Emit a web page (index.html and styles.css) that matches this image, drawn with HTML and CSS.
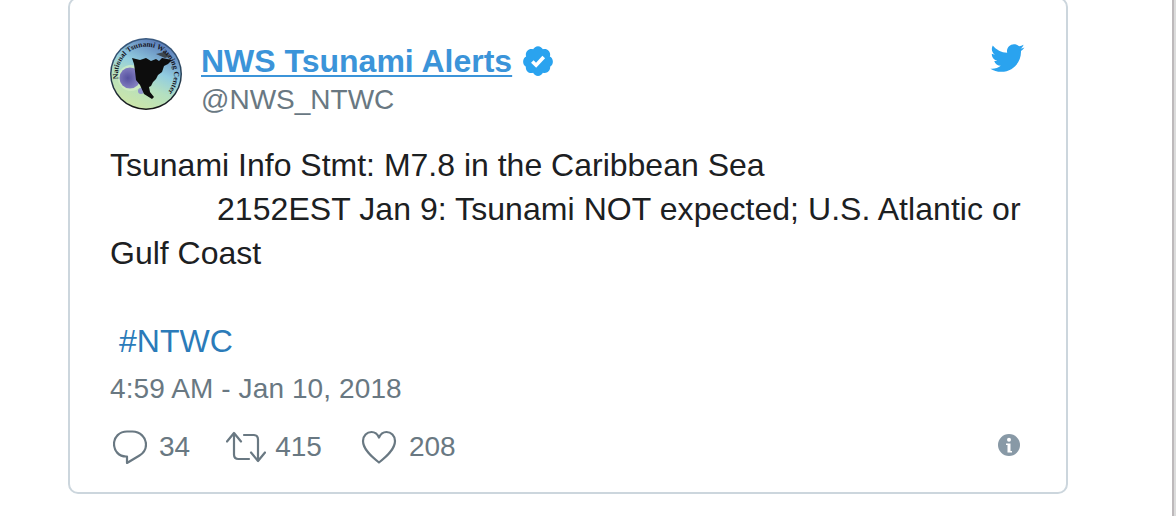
FILE: index.html
```html
<!DOCTYPE html>
<html lang="en">
<head>
<meta charset="utf-8">
<title>NWS Tsunami Alerts</title>
<link rel="stylesheet" href="styles.css">
</head>
<body>
<div class="page">
  <article class="card">
    <header class="head">
      <svg class="avatar" viewBox="0 0 72 72" aria-hidden="true">
        <defs>
          <linearGradient id="av" x1="0.15" y1="0.95" x2="0.6" y2="0">
            <stop offset="0" stop-color="#cfe6a6"/>
            <stop offset=".38" stop-color="#b4e0c0"/>
            <stop offset=".62" stop-color="#92cde0"/>
            <stop offset="1" stop-color="#5d7fba"/>
          </linearGradient>
          <radialGradient id="pur" cx=".4" cy=".5" r=".6">
            <stop offset="0" stop-color="#55519f"/>
            <stop offset="1" stop-color="#8b86c6"/>
          </radialGradient>
          <linearGradient id="rim" x1="0" y1="0" x2="0" y2="1">
            <stop offset="0" stop-color="#3a5a80"/>
            <stop offset=".5" stop-color="#29435a"/>
            <stop offset="1" stop-color="#141414"/>
          </linearGradient>
          <path id="ring" d="M8.300 41A28 28 0 1 1 54 58"/>
          <filter id="soft"><feGaussianBlur stdDeviation=".4"/></filter>
        </defs>
        <g filter="url(#soft)">
          <circle cx="36" cy="36" r="36" fill="url(#rim)"/>
          <circle cx="36" cy="36" r="34.500" fill="url(#av)"/>
          <circle cx="21" cy="40" r="13" fill="#d6efc6" opacity=".7"/>
          <circle cx="20" cy="40" r="10.500" fill="url(#pur)"/>
          <circle cx="31" cy="53" r="3" fill="#8f93cc"/>
          <path d="M22 20l8 2 6-2 5 3 5-2 3 2 3-3 10 2-4 4-4 2-2 6-4 3-2 4-3 3-2 4-2 1 1 5 4 5-2 2-8-5-4-9-4-5-1-9-1-7z" fill="#0b0b0b"/>
          <path d="M46 16l8-2 7 4-6 2z" fill="#3c4650"/>
        </g>
        <text class="ring-text"><textPath href="#ring">National Tsunami Warning Center</textPath></text>
      </svg>
      <div class="names">
        <div class="name-row">
          <a class="name" href="#">NWS Tsunami Alerts</a>
          <svg class="badge" viewBox="0 0 24 24" aria-hidden="true">
            <path fill="#2aa3ef" d="M22.500 12.500c0-1.580-.875-2.950-2.148-3.600.154-.435.238-.905.238-1.400 0-2.210-1.710-3.998-3.818-3.998-.47 0-.92.084-1.336.25C14.818 2.415 13.510 1.500 12 1.500s-2.816.917-3.437 2.250c-.415-.165-.866-.25-1.336-.25-2.110 0-3.818 1.790-3.818 4 0 .494.083.964.237 1.400-1.272.65-2.147 2.018-2.147 3.600 0 1.495.782 2.798 1.942 3.486-.02.17-.032.34-.032.514 0 2.210 1.708 4 3.818 4 .47 0 .92-.086 1.335-.25.62 1.334 1.926 2.250 3.437 2.250 1.512 0 2.818-.916 3.437-2.250.415.163.865.248 1.336.248 2.110 0 3.818-1.790 3.818-4 0-.174-.012-.344-.033-.513 1.158-.687 1.943-1.990 1.943-3.484z"/>
            <path fill="#fff" d="M10.700 16.800 7.100 13.300l1.800-1.800 1.700 1.700 4.500-4.900 1.900 1.700z"/>
          </svg>
        </div>
        <div class="handle">@NWS_NTWC</div>
      </div>
      <svg class="bird" viewBox="0 0 24 24" aria-hidden="true">
        <path fill="#2aa3ef" d="M23.643 4.937c-.835.37-1.732.62-2.675.733.962-.576 1.700-1.490 2.048-2.578-.9.534-1.897.922-2.958 1.130-.85-.904-2.060-1.470-3.400-1.470-2.572 0-4.658 2.086-4.658 4.660 0 .364.042.718.12 1.060-3.873-.195-7.304-2.050-9.602-4.868-.4.69-.63 1.490-.63 2.342 0 1.616.823 3.043 2.072 3.878-.764-.025-1.482-.234-2.110-.583v.06c0 2.257 1.605 4.140 3.737 4.568-.392.106-.803.162-1.227.162-.3 0-.593-.028-.877-.082.593 1.850 2.313 3.198 4.352 3.234-1.595 1.250-3.604 1.995-5.786 1.995-.376 0-.747-.022-1.112-.065 2.062 1.323 4.510 2.093 7.140 2.093 8.570 0 13.255-7.098 13.255-13.254 0-.2-.005-.402-.014-.602.91-.658 1.700-1.477 2.323-2.410z"/>
      </svg>
    </header>
    <p class="body-text">Tsunami Info Stmt: M7.8 in the Caribbean Sea<br><span class="indent">2152EST Jan 9: Tsunami NOT expected; U.S. Atlantic or</span><br>Gulf Coast</p>
    <p class="tag"><a href="#">#NTWC</a></p>
    <div class="time">4:59 AM - Jan 10, 2018</div>
    <footer class="stats">
      <div class="stat">
        <svg class="ico ico-reply" viewBox="0 0 34 34" aria-hidden="true"><path d="M14 1.500h5.500C27 1.500 33 7.500 33 14.500c0 5-3 9-6.500 11L14 33v-6.500h-1C6 26.500 1 21 1 14 1 7 6.500 1.500 14 1.500z"/></svg>
        <span>34</span>
      </div>
      <div class="stat stat-rt">
        <svg class="ico ico-rt" viewBox="0 0 40 34" aria-hidden="true"><path d="M1 11.500 8 3l7 8.500M8 4v20.500c0 3 1.500 4.500 4.500 4.500H23M39 22.500 32 31l-7-8.500M32 30V9.500C32 6.500 30.500 5 27.500 5H18"/></svg>
        <span>415</span>
      </div>
      <div class="stat">
        <svg class="ico ico-heart" viewBox="0 0 36 34" aria-hidden="true"><path d="M18 32.500C11 27 2 19.500 2 11 2 5.500 6 2 10.500 2 13.800 2 16.500 4 18 7.500 19.500 4 22.200 2 25.500 2 30 2 34 5.500 34 11c0 8.500-9 16-16 21.500z"/></svg>
        <span>208</span>
      </div>
      <svg class="info" viewBox="0 0 22 22" aria-hidden="true">
        <circle cx="11" cy="11" r="11" fill="#8899a6"/>
        <circle cx="11" cy="5.800" r="2" fill="#fff"/>
        <path d="M8 9.500h4.500v7.500H14v1.500H9.500v-7.500H8z" fill="#fff"/>
      </svg>
    </footer>
  </article>
  <div class="edge"></div>
</div>
</body>
</html>
```
FILE: styles.css
```css
html, body {
  margin: 0;
  padding: 0;
  background: #fff;
  overflow: hidden;
}
.page {
  width: 1176px;
  height: 516px;
  display: flex;
  align-items: flex-start;
  overflow: hidden;
  font-family: "Liberation Sans", Arial, sans-serif;
}
.card {
  box-sizing: border-box;
  width: 1000px;
  height: 497px;
  margin: -3px 0 0 68px;
  padding: 39px 41px 0 40px;
  border: 2px solid #ccd6dd;
  border-radius: 10px;
  display: flex;
  flex-direction: column;
  flex: none;
}
.head {
  display: flex;
  align-items: flex-start;
}
.avatar {
  width: 72px;
  height: 72px;
  flex: none;
}
.ring-text {
  font: bold 7.500px "Liberation Serif", serif;
  fill: #15151f;
}
.names {
  margin: 3px 0 0 19px;
  flex: 1;
}
.name-row {
  display: flex;
  align-items: center;
  height: 40px;
}
.name {
  font-size: 32px;
  font-weight: 700;
  color: #3b94d9;
  text-decoration: underline;
  text-decoration-thickness: 2px;
  text-underline-offset: 3px;
}
.badge {
  width: 34px;
  height: 34px;
  margin-left: 9px;
  flex: none;
}
.handle {
  font-size: 28px;
  line-height: 38px;
  color: #697882;
}
.bird {
  width: 36px;
  height: 36px;
  flex: none;
  margin-top: 2px;
}
.body-text {
  margin: 24px 0 0;
  font-size: 32px;
  line-height: 44px;
  color: #1c2022;
}
.indent {
  margin-left: 107px;
  letter-spacing: .06px;
}
.tag {
  margin: 44px 0 0 9px;
  font-size: 32px;
  line-height: 44px;
  height: 44px;
}
.tag a {
  color: #2b7bb9;
  text-decoration: none;
}
.time {
  margin-top: 7px;
  font-size: 28px;
  line-height: 38px;
  letter-spacing: .1px;
  color: #697882;
}
.stats {
  display: flex;
  align-items: center;
  margin-top: 19px;
  padding-left: 3px;
  font-size: 28px;
  color: #697882;
  height: 40px;
}
.stat {
  display: flex;
  align-items: center;
  gap: 12px;
  margin-right: 36px;
}
.stat-rt {
  gap: 9px;
}
.ico {
  height: 34px;
  fill: none;
  stroke: #697882;
  stroke-width: 2.200;
  stroke-linejoin: round;
  stroke-linecap: round;
  flex: none;
}
.ico-reply { width: 34px; }
.ico-rt { width: 40px; }
.ico-heart { width: 36px; margin-left: 3px; }
.info {
  width: 22px;
  height: 22px;
  margin: 0 5px 4px auto;
  flex: none;
}
.edge {
  width: 4px;
  height: 516px;
  margin-left: 104px;
  background: #dcdcdc;
  border-left: 2px solid #bdb9bb;
  box-sizing: border-box;
  flex: none;
}
```
